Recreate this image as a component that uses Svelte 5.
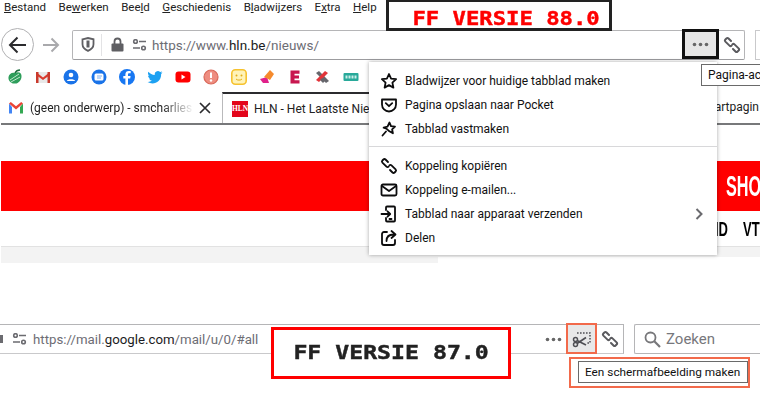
<script lang="ts">
  const menuBar = [
    ["", "B", "estand"],
    ["Be", "w", "erken"],
    ["Bee", "l", "d"],
    ["", "G", "eschiedenis"],
    ["B", "l", "adwijzers"],
    ["E", "x", "tra"],
    ["", "H", "elp"],
  ];

  const firstGroup = [
    { id: "star", label: "Bladwijzer voor huidige tabblad maken" },
    { id: "pocket", label: "Pagina opslaan naar Pocket" },
    { id: "pin", label: "Tabblad vastmaken" },
  ];

  const secondGroup = [
    { id: "link", label: "Koppeling kopiëren" },
    { id: "mail", label: "Koppeling e-mailen..." },
    { id: "send", label: "Tabblad naar apparaat verzenden", more: true },
    { id: "share", label: "Delen" },
  ];
</script>

{#snippet linkIcon(size = 16, weight = 1.8)}
  <svg width={size} height={size} viewBox="0 0 18 18" fill="none" stroke="currentColor" stroke-width={weight} stroke-linecap="round">
    <path d="M8 5 5.500 2.500a1.500 1.500 0 0 0-2.100 0l-1 1a1.500 1.500 0 0 0 0 2.100l4.100 4a1.500 1.500 0 0 0 2.100 0" />
    <path d="M10 13l2.500 2.500a1.500 1.500 0 0 0 2.100 0l1-1a1.500 1.500 0 0 0 0-2.100l-4.100-4a1.500 1.500 0 0 0-2.100 0" />
  </svg>
{/snippet}

{#snippet permIcon()}
  <svg width="15" height="12" viewBox="0 0 15 12" fill="none" stroke="#6b6b70" stroke-width="1.6">
    <circle cx="3.500" cy="2.500" r="1.800" />
    <path d="M7 2.500h7M1 9h7" />
    <circle cx="11.500" cy="9" r="1.800" />
  </svg>
{/snippet}

{#snippet dots()}
  <svg width="17" height="5" viewBox="0 0 17 5" fill="#666"><circle cx="2.500" cy="2.500" r="1.800" /><circle cx="8.500" cy="2.500" r="1.800" /><circle cx="14.500" cy="2.500" r="1.800" /></svg>
{/snippet}

{#snippet menuIcon(id)}
  <svg width="18" height="18" viewBox="0 0 18 18" fill="none" stroke="#0c0c0d" stroke-width="1.8" stroke-linejoin="round" stroke-linecap="round">
    {#if id === "star"}
      <path d="M9 2l2.100 4.600 5 .6-3.700 3.400 1 5L9 13.100l-4.400 2.500 1-5L1.900 7.200l5-.6z" />
    {:else if id === "pocket"}
      <path d="M2 3.500h14v5a7 7 0 0 1-14 0z" />
      <path d="M5.800 7.200 9 10.200l3.200-3" />
    {:else if id === "pin"}
      <path d="M9.500 2.500l1.500 3.700 4 .4-2.900 2.700.8 4-3.500-2-3-2.700L3.600 7.700l3.900-1z" />
      <path d="M6 11.500 2.500 15.500" />
    {:else if id === "link"}
      <path d="M8 5 5.500 2.500a1.500 1.500 0 0 0-2.100 0l-1 1a1.500 1.500 0 0 0 0 2.100l4.100 4a1.500 1.500 0 0 0 2.100 0" />
      <path d="M10 13l2.500 2.500a1.500 1.500 0 0 0 2.100 0l1-1a1.500 1.500 0 0 0 0-2.100l-4.100-4a1.500 1.500 0 0 0-2.100 0" />
    {:else if id === "mail"}
      <rect x="1.500" y="3.500" width="15" height="11" rx="1.500" />
      <path d="M2 5l7 5 7-5" />
    {:else if id === "send"}
      <path d="M6 5V2.500a1 1 0 0 1 1-1h7a1 1 0 0 1 1 1v13a1 1 0 0 1-1 1H7a1 1 0 0 1-1-1V13" />
      <path d="M1.500 9H10M7.500 6.300 10.200 9l-2.700 2.700" />
      <path d="M9.500 14h2" />
    {:else if id === "share"}
      <path d="M7 3H4a2 2 0 0 0-2 2v9a2 2 0 0 0 2 2h9a2 2 0 0 0 2-2v-3" />
      <path d="M6.500 12c0-4 2.500-6.500 7-6.500M11.500 2l4 3.500-4 3.500" />
    {/if}
  </svg>
{/snippet}

<div class="screen">
  <nav class="menubar">
    {#each menuBar as [before, key, after]}
      <span>{before}<u>{key}</u>{after}</span>
    {/each}
  </nav>

  <div class="navrow">
    <button class="back" aria-label="Terug">
      <svg width="20" height="18" viewBox="0 0 20 18" fill="none" stroke="#2b2b2e" stroke-width="2">
        <path d="M18 9H2M9.500 1.500 2 9l7.500 7.500" />
      </svg>
    </button>
    <svg class="forward" width="18" height="16" viewBox="0 0 18 16" fill="none" stroke="#a9a9ac" stroke-width="2">
      <path d="M1 8h15M9.500 1.500 16 8l-6.500 6.500" />
    </svg>
    <div class="urlbar">
      <svg class="shield" width="14" height="15" viewBox="0 0 14 15" fill="none" stroke="#5f5f63" stroke-width="1.800">
        <path d="M1.500 2.300 7 1l5.500 1.300v5c0 3-2.500 5.300-5.500 6.600-3-1.300-5.500-3.600-5.500-6.600z" />
        <path d="M7 3.500v7" stroke-width="3" />
      </svg>
      <i class="sep"></i>
      <svg class="lock" width="13" height="15" viewBox="0 0 13 15">
        <path d="M3.500 7V4.500a3 3 0 0 1 6 0V7" fill="none" stroke="#5f5f63" stroke-width="1.800" />
        <rect x="0.500" y="6.500" width="12" height="8" rx="1" fill="#5f5f63" />
      </svg>
      {@render permIcon()}
      <span class="url">https://www.<b>hln.be</b>/nieuws/</span>
      <span class="dots-btn">{@render dots()}</span>
      <span class="link-btn">{@render linkIcon(18, 2)}</span>
    </div>
    <i class="next-box"></i>
  </div>

  <div class="bookmarks">
    <svg viewBox="0 0 16 16"><path d="M8 4c4-2 7 0 6.500 4-.4 3.500-3.500 7-6.500 6.500C4 15 1 11.500 1.500 8 2 5 5 3 8 4z" fill="#2e9e5b" /><path d="M3 11l9-6M4 13l9-5" stroke="#bfe6cd" stroke-width="1" /><path d="M8 4c1-2 3-3 5-3" stroke="#1f6e3f" stroke-width="1.500" fill="none" /></svg>
    <svg viewBox="0 0 16 16"><path d="M1 3h14v11H1z" fill="#e8e8e8" /><path d="M1 3l7 5.500L15 3v3L8 11 1 6z" fill="#d93b2e" /><path d="M1 3h2.500v11H1zM12.500 3H15v11h-2.500z" fill="#c9392c" /></svg>
    <svg viewBox="0 0 16 16"><circle cx="8" cy="8" r="7.500" fill="#1a73e8" /><circle cx="8" cy="6" r="2.300" fill="#fff" /><path d="M3.800 12c.6-2.400 7.800-2.400 8.400 0z" fill="#fff" /></svg>
    <svg viewBox="0 0 16 16"><circle cx="8" cy="8" r="7.500" fill="#1a73e8" /><rect x="3.500" y="4.500" width="9" height="7" rx="1.500" fill="#fff" /><path d="M6 7h5M6 9h4" stroke="#7fb0f0" /></svg>
    <svg viewBox="0 0 16 16"><circle cx="8" cy="8" r="8" fill="#1877f2" /><path d="M9 16V9.500h2.200l.4-2.500H9V5.600c0-.8.300-1.300 1.400-1.300h1.300V2.100C11 2 10.300 2 9.700 2 7.700 2 6.400 3.200 6.400 5.300V7H4.300v2.500h2.100V16z" fill="#fff" /></svg>
    <svg viewBox="0 0 16 16"><path d="M15.500 3.500c-.6.300-1.200.4-1.800.5.700-.4 1.100-1 1.400-1.700-.6.400-1.300.6-2 .8a3.100 3.100 0 0 0-5.300 2.800C5.200 5.800 2.900 4.600 1.400 2.700c-.8 1.400-.4 3.200 1 4.100-.5 0-1-.1-1.400-.4 0 1.500 1.100 2.800 2.500 3.100-.5.100-.9.100-1.400 0 .4 1.200 1.500 2.100 2.900 2.100A6.300 6.300 0 0 1 .5 13c6.500 3.800 14.200-.5 13.600-8 .6-.4 1-.9 1.400-1.500z" fill="#1da1f2" /></svg>
    <svg viewBox="0 0 16 16"><rect x="0.500" y="2.500" width="15" height="11" rx="3" fill="#f00" /><path d="M6.500 5.500v5l4-2.500z" fill="#fff" /></svg>
    <svg viewBox="0 0 16 16"><circle cx="8" cy="8" r="7" fill="#ee8d80" stroke="#d9695a" stroke-width="1.200" /><path d="M8 3.500v5.500" stroke="#fff" stroke-width="2" /><circle cx="8" cy="11.500" r="1.200" fill="#fff" /></svg>
    <svg viewBox="0 0 16 16"><rect x="0.800" y="0.800" width="14.400" height="14.400" rx="3.500" fill="#fff3b8" stroke="#f6c22f" stroke-width="1.600" /><circle cx="5.500" cy="6.500" r="1" fill="#e2ac18" /><circle cx="10.500" cy="6.500" r="1" fill="#e2ac18" /><path d="M5 10c1.500 1.500 4.500 1.500 6 0" stroke="#e2ac18" fill="none" /></svg>
    <svg viewBox="0 0 16 16"><path d="M1 10l7-2 2 6-6 0z" fill="#e0218a" /><path d="M5 8l6-7 4 4-4 6z" fill="#f58a2c" /></svg>
    <svg viewBox="0 0 16 16"><path d="M3.500 1.500h9v3.300H7.500v1.700h4.500v3H7.500v1.700h5v3.300h-9z" fill="#c8174f" /></svg>
    <svg viewBox="0 0 16 16"><path d="M1 4l3-2 10 10-3 2z" fill="#66666c" /><path d="M1 11l9-9 3 2-9 9z" fill="#e2343a" /><path d="M7 9l3 3-2 2-3-3z" fill="#66666c" /></svg>
    <svg viewBox="0 0 16 16"><rect x="0.500" y="4" width="15" height="8" rx="1" fill="#28a99a" /><path d="M2.500 6.500h2v3h-2zM5.500 6.500h2v3h-2zM8.500 6.500h2v3h-2zM11.500 6.500h2v3h-2z" fill="#cdeee9" /></svg>
  </div>

  <div class="tabs">
    <div class="tab">
      <svg class="favicon" viewBox="0 0 16 16">
        <path d="M1 3.500v10h3V7z" fill="#4285f4" />
        <path d="M15 3.500v10h-3V7z" fill="#34a853" />
        <path d="M1 3.500 2.800 2 8 6.200 13.200 2 15 3.500 8 9.500z" fill="#ea4335" />
      </svg>
      <span class="tab-title fade">(geen onderwerp) - smcharlies</span>
      <svg class="close" width="12" height="12" viewBox="0 0 12 12" stroke="#2b2b2e" stroke-width="1.700"><path d="M1 1l10 10M11 1 1 11" /></svg>
    </div>
    <div class="tab active">
      <span class="hln">HLN</span>
      <span class="tab-title">HLN - Het Laatste Nie</span>
    </div>
    <span class="far-tab">artpagin</span>
  </div>

  <div class="page">
    <div class="redbar"><span>SHO</span></div>
    <div class="sections"><span>ID</span><span>VT</span></div>
    <div class="greyband"><i></i><i></i></div>
  </div>

  <div class="lower">
    <div class="lower-url">
      <i class="lock-cut"></i>
      {@render permIcon()}
      <span class="url small">https://mail.<b>google.com</b>/mail/u/0/#all</span>
      <span class="dots-plain">{@render dots()}</span>
      <span class="shot-btn">
        <svg width="20" height="18" viewBox="0 0 20 18" fill="none" stroke="#4f4f54" stroke-width="1.500">
          <path d="M5 3h13v10h-4" stroke-dasharray="1.600 1.400" />
          <circle cx="3.500" cy="9.500" r="2" />
          <circle cx="3.500" cy="14.500" r="2" />
          <path d="M5 10.500 14 15M5 13.500 14 7.500" stroke-width="1.700" />
        </svg>
      </span>
      <span class="link-btn low">{@render linkIcon(18, 2)}</span>
    </div>
    <div class="searchbox">
      <svg width="17" height="17" viewBox="0 0 17 17" fill="none" stroke="#77777a" stroke-width="1.800">
        <circle cx="6.500" cy="6.500" r="5" />
        <path d="M10.300 10.300 16 16" stroke-width="2.200" />
      </svg>
      <span>Zoeken</span>
    </div>
  </div>

  <div class="label dark"><span>FF VERSIE 88.0</span></div>
  <div class="label bright"><span>FF VERSIE 87.0</span></div>

  <div class="pagemenu">
    <ul>
      {#each firstGroup as item}
        <li>{@render menuIcon(item.id)}<span>{item.label}</span></li>
      {/each}
    </ul>
    <hr />
    <ul>
      {#each secondGroup as item}
        <li>
          {@render menuIcon(item.id)}<span>{item.label}</span>
          {#if item.more}
            <svg class="chevron" width="8" height="12" viewBox="0 0 8 12" fill="none" stroke="#6a6a6e" stroke-width="2"><path d="M1.500 1 6.500 6l-5 5" /></svg>
          {/if}
        </li>
      {/each}
    </ul>
  </div>

  <div class="tooltip first">Pagina-ac</div>
  <div class="tip-frame"><div class="tooltip second">Een schermafbeelding maken</div></div>
</div>

<style>
  :global(body) {
    margin: 0;
    background: #fff;
  }
  .screen {
    position: relative;
    width: 760px;
    height: 413px;
    overflow: hidden;
    background: #fff;
    color: #0c0c0d;
    font-family: Roboto, "Noto Sans", sans-serif;
    font-size: 12px;
  }
  .menubar {
    display: flex;
    gap: 12.5px;
    height: 29px;
    padding-left: 4px;
    font-size: 11.5px;
    line-height: 14px;
    color: #222;
    box-sizing: border-box;
  }
  .navrow {
    display: flex;
    align-items: center;
    height: 31px;
    position: relative;
  }
  .back {
    width: 33px;
    height: 33px;
    margin-left: 1px;
    padding: 0;
    display: flex;
    align-items: center;
    justify-content: center;
    border: 1px solid #b1b1b3;
    border-radius: 50%;
    background: #fff;
    flex: none;
  }
  .forward {
    margin-left: 8px;
    flex: none;
  }
  .urlbar {
    display: flex;
    align-items: center;
    width: 673px;
    height: 30px;
    margin-left: 12px;
    box-sizing: border-box;
    border: 1px solid #b5b5b7;
    border-bottom-color: #9c9c9f;
    border-radius: 2px;
    flex: none;
  }
  .shield {
    margin-left: 8px;
  }
  .sep {
    width: 1px;
    height: 22px;
    margin: 0 9px 0 6px;
    background: #e3e3e5;
  }
  .lock {
    margin-right: 8px;
  }
  .url {
    margin-left: 5px;
    font-size: 13.5px;
    color: #6d6d74;
    white-space: nowrap;
  }
  .url b {
    font-weight: 400;
    color: #1b1b22;
  }
  .url.small {
    margin-left: 6px;
    font-size: 13.25px;
  }
  .dots-btn {
    display: flex;
    align-items: center;
    justify-content: center;
    width: 37px;
    height: 30px;
    margin-left: auto;
    margin-top: -1px;
    box-sizing: border-box;
    border: 3px solid #111;
    background: #e6e6e6;
  }
  .link-btn {
    display: flex;
    width: 25px;
    justify-content: center;
    color: #5a5a5e;
  }
  .next-box {
    width: 6px;
    height: 30px;
    margin-left: 10px;
    box-sizing: border-box;
    border: 1px solid #c9c9cb;
    border-right: 0;
    flex: none;
  }
  .bookmarks {
    display: flex;
    gap: 12px;
    height: 32px;
    padding: 9px 0 0 7px;
    box-sizing: border-box;
  }
  .bookmarks svg {
    width: 16px;
    height: 16px;
    flex: none;
  }
  .tabs {
    display: flex;
    height: 33px;
    margin-left: 1px;
    border-bottom: 2px solid #77787a;
    box-sizing: border-box;
    position: relative;
  }
  .tab {
    display: flex;
    align-items: center;
    width: 221px;
    box-sizing: border-box;
    padding-left: 7px;
    font-size: 12px;
    color: #222;
  }
  .tab.active {
    width: 400px;
    padding-left: 9px;
    border-top: 2px solid #2b2b2e;
    border-left: 1px solid #b9b9bb;
  }
  .favicon {
    width: 16px;
    height: 16px;
    flex: none;
  }
  .tab-title {
    margin-left: 6px;
    white-space: nowrap;
  }
  .tab-title.fade {
    width: 164px;
    flex: none;
    -webkit-mask-image: linear-gradient(to right, #000 80%, transparent);
    mask-image: linear-gradient(to right, #000 80%, transparent);
  }
  .close {
    margin-left: 5px;
    flex: none;
  }
  .hln {
    width: 16px;
    height: 16px;
    flex: none;
    background: #e3051b;
    color: #fff;
    font: 700 7.500px/16px "Liberation Serif", serif;
    text-align: center;
  }
  .far-tab {
    position: absolute;
    right: 1px;
    top: 8px;
    font-size: 12px;
    color: #222;
  }
  .page {
    height: 199px;
    padding: 36px 0 0 1px;
    box-sizing: border-box;
  }
  .redbar {
    display: flex;
    justify-content: flex-end;
    height: 50px;
    overflow: hidden;
    background: #f00;
  }
  .redbar span {
    width: 34px;
    color: #fff;
    font: 700 29px/50px "Liberation Sans", sans-serif;
    transform: scaleX(0.56);
    transform-origin: left;
    white-space: nowrap;
  }
  .sections {
    display: flex;
    justify-content: flex-end;
    gap: 11px;
    height: 35px;
  }
  .sections span {
    color: #000;
    font: 700 21px/35px "Liberation Sans", sans-serif;
    transform: scaleX(0.62);
    white-space: nowrap;
  }
  .sections span:last-child {
    width: 17px;
    transform-origin: left;
  }
  .greyband {
    display: flex;
    align-items: flex-start;
    border-top: 1px solid #e2e2e2;
  }
  .greyband i {
    width: 437px;
    height: 16px;
    background: #f3f3f3;
  }
  .greyband i:last-child {
    flex: 1;
    height: 10px;
  }
  .lower {
    display: flex;
    height: 30px;
    margin-top: 0;
  }
  .lower-url {
    display: flex;
    align-items: center;
    width: 624px;
    height: 30px;
    box-sizing: border-box;
    border-top: 1px solid #b5b5b7;
    border-right: 1px solid #b5b5b7;
    border-bottom: 1px solid #c9c9cb;
    padding-left: 12px;
    position: relative;
    flex: none;
  }
  .lock-cut {
    position: absolute;
    left: 0;
    top: 10px;
    width: 3px;
    height: 8px;
    background: #6b6b70;
  }
  .dots-plain {
    display: flex;
    margin-left: auto;
  }
  .shot-btn {
    display: flex;
    align-items: center;
    justify-content: center;
    width: 31px;
    height: 31px;
    margin: -1px 0 0 4px;
    box-sizing: border-box;
    border: 2px solid #f26a4b;
    background: #e8e8e8;
  }
  .link-btn.low {
    width: 26px;
  }
  .searchbox {
    display: flex;
    align-items: center;
    gap: 5px;
    flex: 1;
    height: 30px;
    margin-left: 10px;
    padding-left: 9px;
    box-sizing: border-box;
    border: 1px solid #b5b5b7;
    border-right: 0;
    border-radius: 2px 0 0 2px;
    font-size: 15px;
    color: #77777c;
  }
  .label {
    position: absolute;
    display: flex;
    align-items: center;
    justify-content: center;
    box-sizing: border-box;
    font: 700 19px "DejaVu Sans Mono", monospace;
    white-space: nowrap;
    background: #fff;
    -webkit-text-stroke: 0.4px currentColor;
  }
  .label.dark {
    left: 386px;
    top: -1px;
    width: 226px;
    height: 32px;
    padding: 6px 0 0 15px;
    border: 3px solid #222;
    color: #f00;
  }
  .label.dark span {
    transform: scaleX(1.17);
  }
  .label.bright {
    left: 271px;
    top: 327px;
    width: 240px;
    height: 52px;
    padding-bottom: 2px;
    border: 3px solid #f00;
    color: #222;
  }
  .label.bright span {
    transform: scaleX(1.22);
  }
  .pagemenu {
    position: absolute;
    left: 369px;
    top: 62px;
    width: 348px;
    height: 193px;
    box-sizing: border-box;
    padding-top: 7px;
    background: #fff;
    box-shadow: 0 0 4px rgba(0, 0, 0, 0.35);
    font-size: 12px;
    color: #111;
  }
  .pagemenu ul {
    margin: 0;
    padding: 0;
    list-style: none;
  }
  .pagemenu li {
    display: flex;
    align-items: center;
    gap: 7px;
    height: 24px;
    padding-left: 11px;
  }
  .pagemenu hr {
    height: 1px;
    margin: 5px 0 7px;
    border: 0;
    background: #d8d8da;
  }
  .chevron {
    margin-left: auto;
    margin-right: 14px;
  }
  .tooltip {
    box-sizing: border-box;
    border: 1px solid #6a6a6a;
    background: #fff;
    color: #111;
    font-size: 12px;
    white-space: nowrap;
  }
  .tooltip.first {
    position: absolute;
    left: 701px;
    top: 64px;
    width: 70px;
    height: 22px;
    padding-left: 6px;
    line-height: 20px;
  }
  .tip-frame {
    position: absolute;
    left: 569px;
    top: 357px;
    width: 181px;
    height: 31px;
    box-sizing: border-box;
    padding: 2px 0 0 7px;
    border: 2px solid #f26a4b;
  }
  .tooltip.second {
    width: 170px;
    height: 22px;
    padding-left: 6px;
    font-size: 11.800px;
    line-height: 20px;
  }
</style>
